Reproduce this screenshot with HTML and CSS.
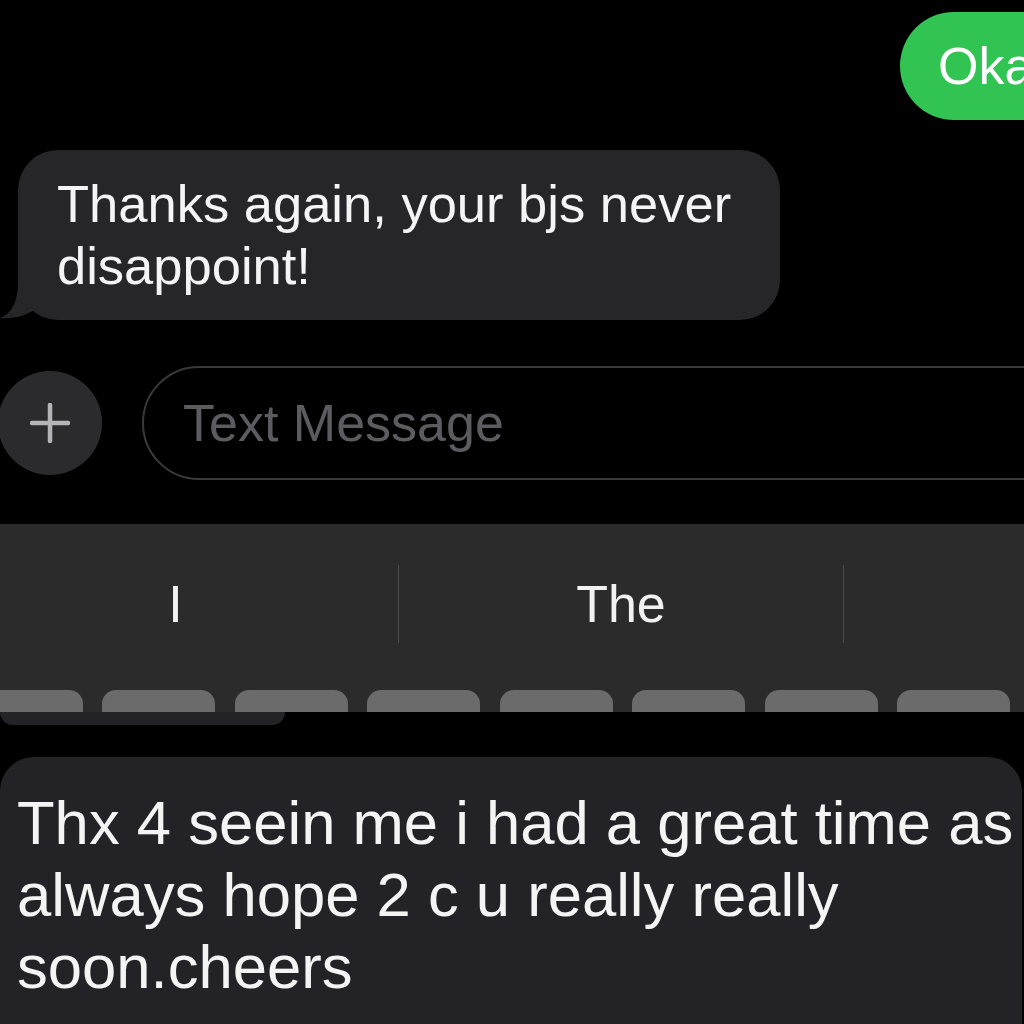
FILE: index.html
```html
<!DOCTYPE html>
<html lang="en">
<head>
  <meta charset="UTF-8">
  <title>Messages</title>
  <meta name="viewport" content="width=device-width, initial-scale=1.0"/>
  <link rel="stylesheet" href="styles.css">
</head>
<body>
  <div class="thread">
    <div class="row-out">
      <div class="bubble-out">Okay</div>
    </div>
    <div class="bubble-in">
      Thanks again, your bjs never disappoint!
      <svg class="tail" viewBox="0 270 60 50" width="60" height="50">
        <path d="M18 276 L18 282 C18 303 11 314 0 318 C14 319 26 316 35 309 L40 276 Z" fill="#262629"/>
      </svg>
    </div>
  </div>

  <div class="composer">
    <div class="plus">
      <svg viewBox="0 0 40 40" width="40" height="40">
        <path d="M20 2 V38 M2 20 H38" stroke="#b4b4b8" stroke-width="4.5" stroke-linecap="round"/>
      </svg>
    </div>
    <div class="field">Text Message</div>
  </div>

  <div class="keyboard">
    <div class="suggestions">
      <div class="sugg">I</div>
      <div class="sugg">The</div>
      <div class="sugg"></div>
    </div>
    <div class="keys">
      <div class="key"></div>
      <div class="key"></div>
      <div class="key"></div>
      <div class="key"></div>
      <div class="key"></div>
      <div class="key"></div>
      <div class="key"></div>
      <div class="key"></div>
      <div class="key"></div>
    </div>
  </div>

  <div class="peek"></div>
  <div class="bubble-big">Thx 4 seein me i had a great time as always hope 2 c u really really soon.cheers</div>
</body>
</html>
```

FILE: styles.css
```css
body {
  margin: 0;
  width: 1024px;
  height: 1024px;
  overflow: hidden;
  background: #000;
  color: #f4f4f5;
  font-family: "Liberation Sans", Arial, sans-serif;
}
.thread {
  padding-top: 12px;
}
.row-out {
  display: flex;
  padding-left: 900px;
}
.bubble-out {
  flex: none;
  width: 320px;
  height: 108px;
  box-sizing: border-box;
  padding-left: 38px;
  border-radius: 54px;
  background: #31c453;
  color: #fff;
  font-size: 52px;
  line-height: 108px;
  white-space: nowrap;
}
.bubble-in {
  position: relative;
  width: 762px;
  box-sizing: border-box;
  margin: 30px 0 0 18px;
  padding: 23px 39px;
  border-radius: 40px;
  background: #262629;
  font-size: 52.5px;
  line-height: 62px;
}
.tail {
  position: absolute;
  left: -18px;
  top: 120px;
}
.composer {
  display: flex;
  align-items: center;
  margin-top: 46px;
  height: 114px;
}
.plus {
  flex: none;
  width: 104px;
  height: 104px;
  margin-left: -2px;
  border-radius: 50%;
  background: #2b2b2d;
  display: flex;
  align-items: center;
  justify-content: center;
}
.field {
  flex: none;
  width: 1000px;
  height: 114px;
  box-sizing: border-box;
  margin-left: 40px;
  padding-left: 39px;
  border: 2px solid #3a3a3c;
  border-radius: 57px;
  color: #5c5c60;
  font-size: 52px;
  line-height: 110px;
}
.keyboard {
  margin-top: 44px;
  height: 188px;
  overflow: hidden;
  background: #2b2b2b;
}
.suggestions {
  display: grid;
  grid-template-columns: 445px 445px 445px;
  margin-left: -47px;
  padding-top: 41px;
}
.sugg {
  height: 78px;
  text-align: center;
  font-size: 52px;
  line-height: 78px;
  color: #f2f2f2;
}
.sugg + .sugg {
  border-left: 1px solid #4a4a4a;
}
.keys {
  display: flex;
  gap: 19.5px;
  margin: 47px 0 0 -30.5px;
}
.key {
  flex: none;
  width: 113px;
  height: 40px;
  border-radius: 14px;
  background: #6b6b6b;
}
.peek {
  width: 285px;
  height: 13px;
  background: #232326;
  border-bottom-right-radius: 22px;
  border-bottom-left-radius: 22px;
}
.bubble-big {
  width: 1022px;
  box-sizing: border-box;
  margin-top: 32px;
  padding: 30px 2px 40px 17px;
  border-radius: 34px 34px 0 0;
  background: #232327;
  font-size: 61.6px;
  line-height: 72px;
}
```
